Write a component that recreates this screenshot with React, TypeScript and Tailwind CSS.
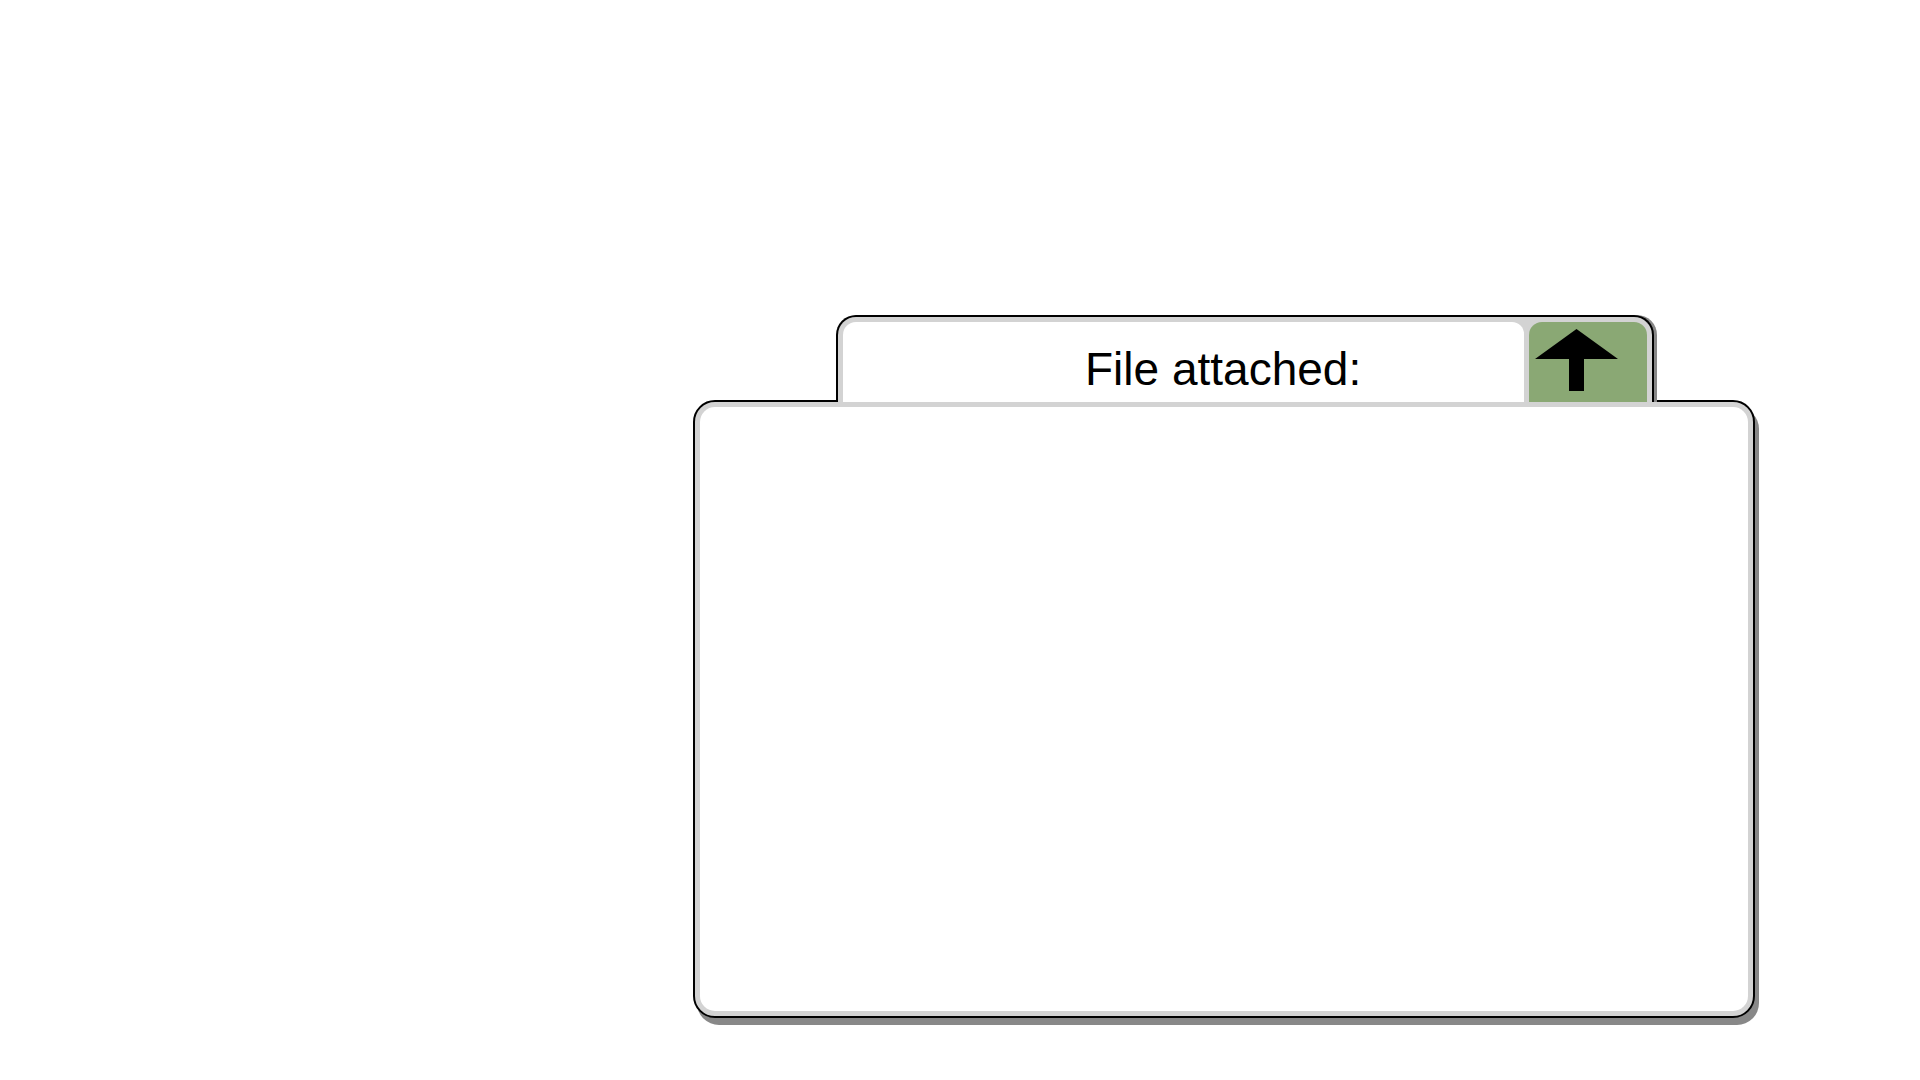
const UpArrow = () => (
    <svg width="84" height="63" viewBox="0 0 84 63" className="block">
        <polygon points="0,30 41.5,0 83,30 49,30 49,62 34,62 34,30" fill="#000" />
    </svg>
);

const App = () => {
    return (
        <div className="w-[1920px] h-[1080px] bg-white overflow-hidden">
            <div className="pt-[315px] pl-[693px] flex flex-col items-start">

                {/* Tab */}
                <div className="relative z-10 ml-[143px] w-[818px] h-[87px] flex gap-[5px] px-[5px] pt-[5px] bg-[#d3d3d3] border-2 border-b-0 border-black rounded-t-[20px] shadow-[3px_0_0_#888888]">
                    <div className="w-[681px] h-full bg-white rounded-tl-[13px] rounded-tr-[12px] pt-[24px] pl-[242px]">
                        <span className="block text-[46px] leading-none text-black font-['Liberation_Sans',Arial,sans-serif]">
                            File attached:
                        </span>
                    </div>
                    <div className="w-[118px] h-full bg-[#8aa874] rounded-t-[13px] pl-[6px] pt-[7px]">
                        <UpArrow />
                    </div>
                </div>

                {/* Panel */}
                <div className="-mt-[2px] w-[1062px] h-[618px] p-[5px] bg-[#d3d3d3] border-2 border-black rounded-[22px] shadow-[4px_7px_0_#888888]">
                    <div className="w-full h-full bg-white rounded-[15px]" />
                </div>

            </div>
        </div>
    );
};

export default App;
